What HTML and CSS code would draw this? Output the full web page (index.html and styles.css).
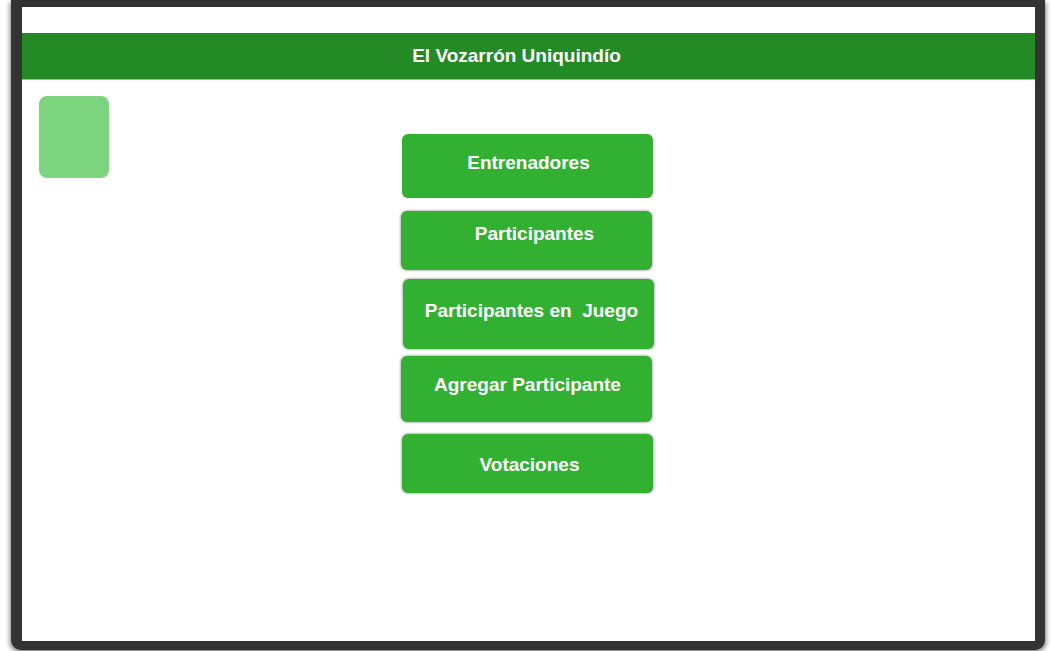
FILE: index.html
```html
<!DOCTYPE html>
<html lang="es">
<head>
<meta charset="utf-8">
<title>El Vozarrón Uniquindío</title>
<link rel="stylesheet" href="styles.css">
</head>
<body>
<div class="device">
  <div class="screen">
    <div class="topgap"></div>
    <header class="appbar">El Vozarrón Uniquindío</header>
    <main class="content">
      <div class="side">
        <div class="avatar"></div>
      </div>
      <nav class="menu">
        <div class="btn btn-1">Entrenadores</div>
        <div class="btn btn-2">Participantes</div>
        <div class="btn btn-3">Participantes en&nbsp; Juego</div>
        <div class="btn btn-4">Agregar Participante</div>
        <div class="btn btn-5">Votaciones</div>
      </nav>
      <div class="side"></div>
    </main>
  </div>
</div>
</body>
</html>
```

FILE: styles.css
```css
* { box-sizing: border-box; }
html, body {
  margin: 0;
  padding: 0;
  background: #ffffff;
  font-family: "Liberation Sans", Arial, sans-serif;
}
body {
  width: 1051px;
  height: 651px;
  overflow: hidden;
}
.device {
  margin-left: 11px;
  width: 1034px;
  height: 650px;
  background: #333333;
  border-radius: 0 0 10px 10px;
  padding: 7px 10px 9px 11px;
  box-shadow: -2px 2px 4px rgba(0,0,0,0.35), 2px 2px 4px rgba(0,0,0,0.35);
}
.screen {
  width: 1013px;
  height: 634px;
  background: #ffffff;
  display: flex;
  flex-direction: column;
}
.topgap {
  height: 26px;
  flex: none;
}
.appbar {
  height: 47px;
  flex: none;
  background: #248a25;
  border-bottom: 1px solid #8cc98c;
  color: #ffffff;
  font-weight: bold;
  font-size: 19px;
  display: flex;
  align-items: center;
  justify-content: center;
  padding-right: 24px;
}
.content {
  flex: 1;
  display: grid;
  grid-template-columns: 1fr auto 1fr;
}
.avatar {
  margin-top: 16px;
  margin-left: 17px;
  width: 70px;
  height: 82px;
  background: #7dd47f;
  border-radius: 8px;
}
.menu {
  margin-top: 54px;
  margin-left: -2px;
  display: flex;
  flex-direction: column;
  width: 253px;
}
.btn {
  width: 251px;
  background: #32b032;
  color: #ffffff;
  font-weight: bold;
  font-size: 19px;
  border-radius: 6px;
  display: flex;
  justify-content: center;
  align-items: flex-start;
  line-height: 22px;
  white-space: nowrap;
}
.btn-1 {
  height: 64px;
  margin-left: 1px;
  padding-top: 18px;
  padding-left: 2px;
  box-shadow: 0 0 1px rgba(0,0,0,0.15);
}
.btn-2 {
  height: 59px;
  margin-top: 13px;
  padding-top: 12px;
  padding-left: 16px;
  box-shadow: 0 0 2px 1px rgba(0,0,0,0.25);
}
.btn-3 {
  height: 70px;
  margin-top: 9px;
  margin-left: 2px;
  padding-top: 21px;
  padding-left: 6px;
  box-shadow: 0 0 2px 1px rgba(0,0,0,0.25);
}
.btn-4 {
  height: 66px;
  margin-top: 7px;
  padding-top: 18px;
  padding-left: 2px;
  box-shadow: 0 0 2px 1px rgba(0,0,0,0.25);
}
.btn-5 {
  height: 59px;
  margin-top: 12px;
  margin-left: 1px;
  padding-top: 20px;
  padding-left: 4px;
  box-shadow: 0 0 2px 1px rgba(0,0,0,0.25);
}
```
